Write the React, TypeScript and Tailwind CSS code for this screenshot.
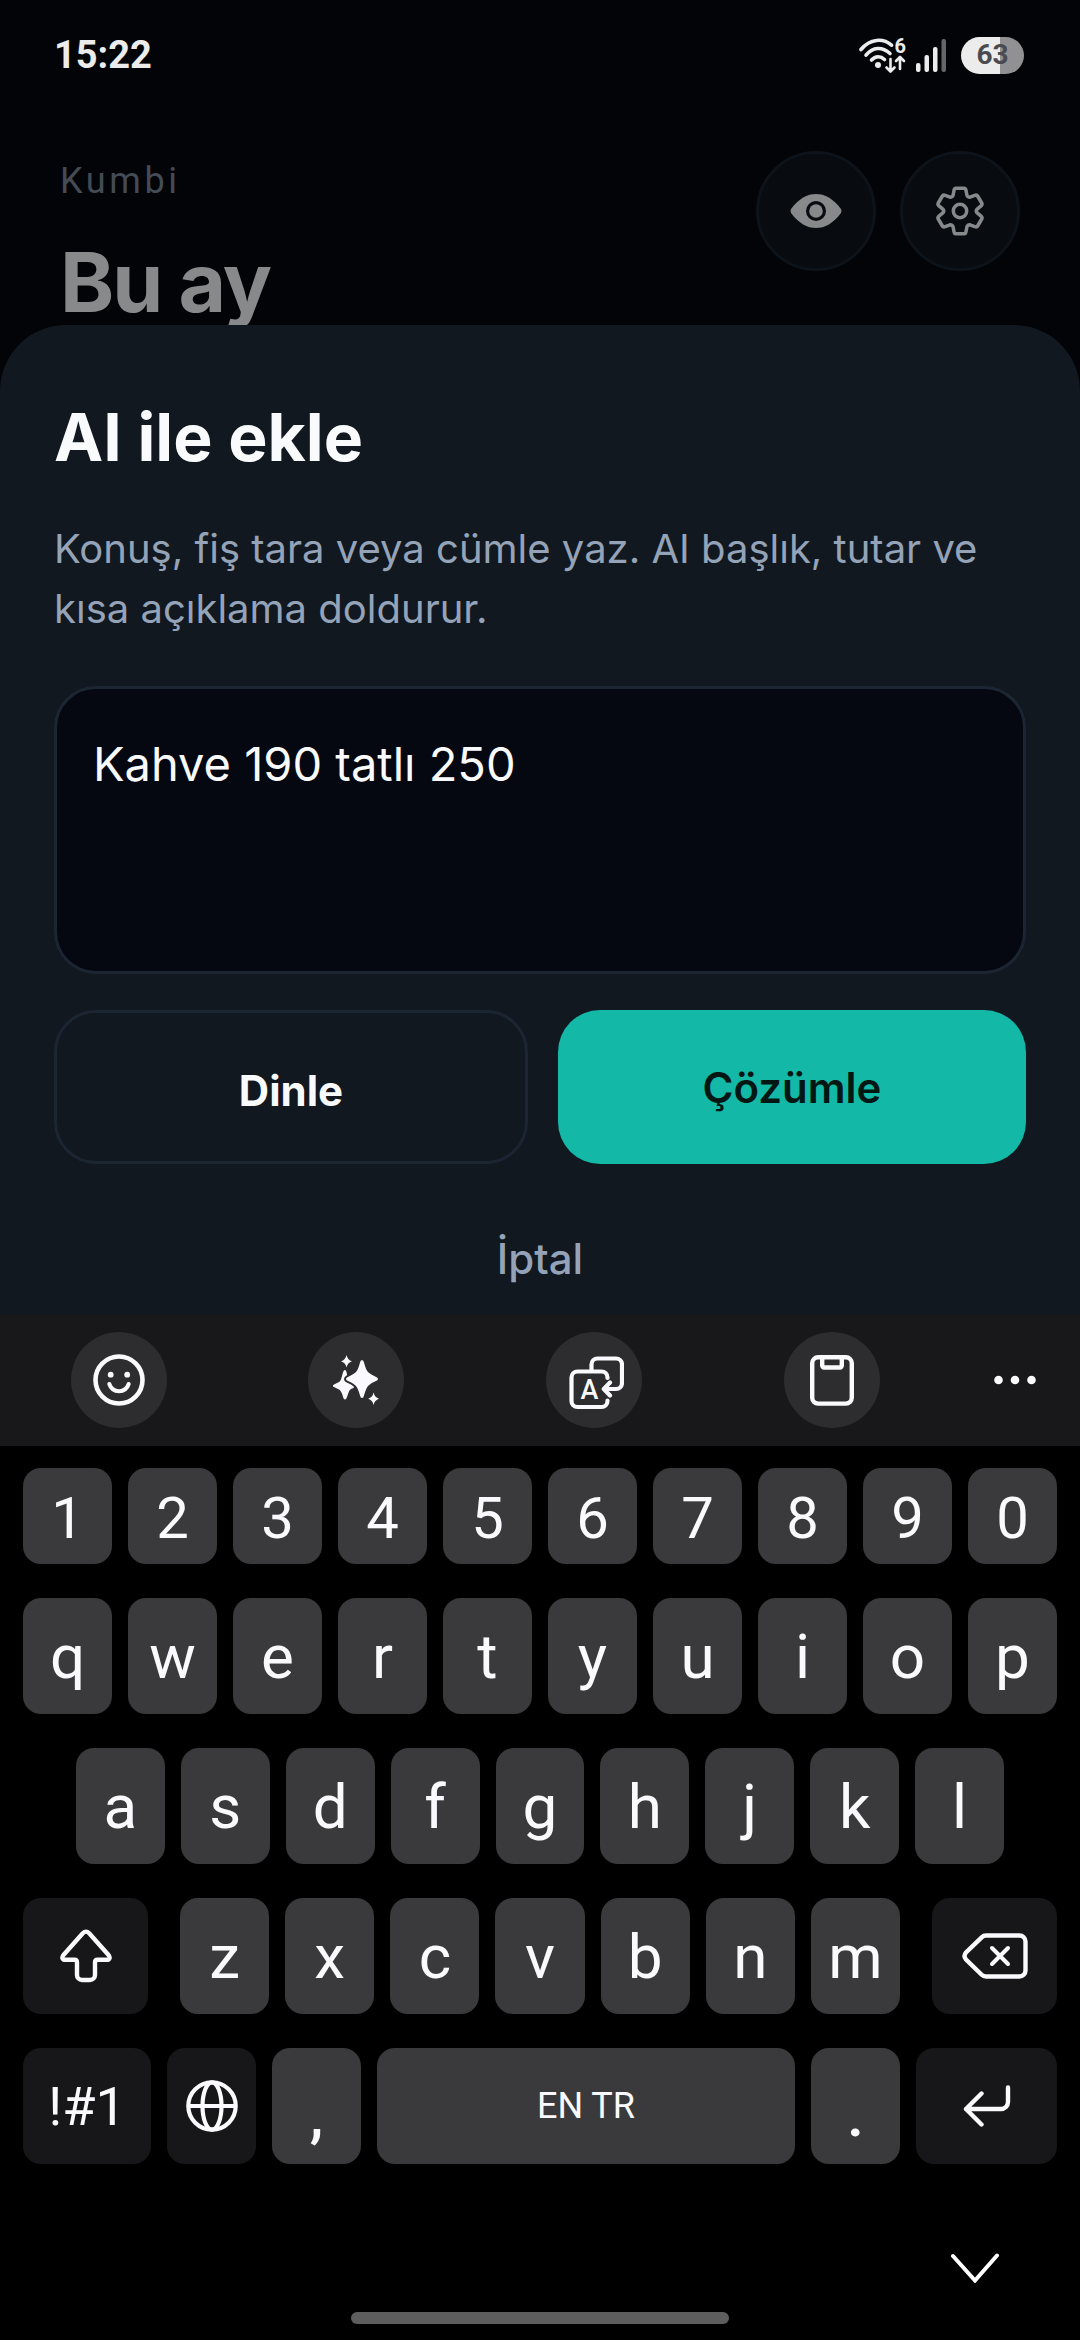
import React, { useState } from 'react';

const numberRow = ['1', '2', '3', '4', '5', '6', '7', '8', '9', '0'];
const topRow = ['q', 'w', 'e', 'r', 't', 'y', 'u', 'i', 'o', 'p'];
const homeRow = ['a', 's', 'd', 'f', 'g', 'h', 'j', 'k', 'l'];
const bottomRow = ['z', 'x', 'c', 'v', 'b', 'n', 'm'];

const keyBase =
  'flex min-w-0 items-center justify-center rounded-[18px] font-[Roboto,sans-serif] text-[#fafafe]';

type KeyProps = {
  label?: string;
  dark?: boolean;
  className?: string;
  children: React.ReactNode;
};

const Key = ({ label, dark, className = 'flex-1 text-[62px]', children }: KeyProps) => (
  <button
    type="button"
    aria-label={label}
    className={`${keyBase} ${dark ? 'bg-[#171719]' : 'bg-[#3a3a3c]'} ${className}`}
  >
    {children}
  </button>
);

const WifiIcon = () => (
  <svg width="50" height="52" viewBox="0 -8 50 52" fill="none" stroke="#ececec" strokeLinecap="round">
    <path d="M2 12.5C11 1.500 24 .8 32.500 8.200" strokeWidth="3.600" />
    <path d="M7 18.200C14 9.800 23 9.500 31 16.500" strokeWidth="3.600" />
    <path d="M12.500 23C16.500 18.800 21.500 18.800 25.500 22.500" strokeWidth="3.600" />
    <circle cx="19" cy="28" r="3" fill="#ececec" stroke="none" />
    <path d="M31.500 22v12M27.500 30.500l4 4 4-4" strokeWidth="2.600" strokeLinejoin="round" />
    <path d="M41 32V20.500M37 24l4-4 4 4" strokeWidth="2.600" strokeLinejoin="round" />
    <text x="35.500" y="16" fill="#ececec" stroke="none" fontSize="20" fontWeight="700" fontFamily="Roboto">
      6
    </text>
  </svg>
);

const SignalIcon = () => (
  <svg width="32" height="36" viewBox="0 0 32 36" fill="#ececec">
    <rect x="1" y="26" width="4.500" height="9" rx="2" />
    <rect x="9.500" y="18" width="4.500" height="17" rx="2" />
    <rect x="18" y="10" width="4.500" height="25" rx="2" />
    <rect x="26.500" y="2" width="4.500" height="33" rx="2" fill="#666" />
  </svg>
);

const EyeIcon = () => (
  <svg width="52" height="34" viewBox="0 0 52 34" fill="#88898b">
    <path d="M1 15C9 4.500 17 0 26 0s17 4.500 25 15q1 2 0 4C43 29.500 35 34 26 34S9 29.500 1 19q-1-2 0-4Z" />
    <circle cx="26" cy="17" r="10" fill="#080c11" />
    <circle cx="26" cy="17" r="6.800" />
  </svg>
);

const GearIcon = () => (
  <svg
    width="50"
    height="50"
    viewBox="-25 -25 50 50"
    fill="none"
    stroke="#88898b"
    strokeWidth="3.500"
    strokeLinejoin="round"
  >
    <path d="M-7-15.500L-5.800-21.500Q-5.500-22.700-4.300-22.700H4.300Q5.500-22.700 5.800-21.500L7-15.500Q8-13.300 9.900-13.800L15.500-15.800Q16.900-16.100 17.600-15L22-7.500Q22.400-6.600 21.600-5.700L16.900-1.700Q15.600 0 16.900 1.700L21.600 5.700Q22.400 6.600 22 7.500L17.600 15Q16.900 16.100 15.500 15.800L9.900 13.800Q8 13.300 7 15.500L5.800 21.500Q5.500 22.700 4.300 22.700H-4.300Q-5.500 22.700-5.800 21.500L-7 15.500Q-8 13.300-9.900 13.800L-15.500 15.800Q-16.900 16.100-17.600 15L-22 7.500Q-22.400 6.600-21.600 5.700L-16.900 1.700Q-15.600 0-16.900-1.700L-21.600-5.700Q-22.400-6.600-22-7.500L-17.600-15Q-16.900-16.100-15.500-15.800L-9.900-13.800Q-8-13.300-7-15.500Z" />
    <circle r="6.700" />
  </svg>
);

const SmileIcon = () => (
  <svg width="52" height="52" viewBox="0 0 52 52" fill="none" stroke="#fafafe" strokeWidth="4.600">
    <circle cx="26" cy="26" r="23.500" />
    <circle cx="17.700" cy="20.700" r="2.900" fill="#fafafe" stroke="none" />
    <circle cx="34.200" cy="20.700" r="2.900" fill="#fafafe" stroke="none" />
    <path d="M16.300 30C19.500 39.500 32.500 39.500 35.700 30" strokeWidth="4" strokeLinecap="round" />
  </svg>
);

const SparkleIcon = () => (
  <svg width="56" height="56" viewBox="0 0 56 56" fill="#fafafe">
    <path d="M17 18Q18 18 18.500 20Q20 29 22 31Q24 33 26.500 34.500Q26 36 23 37Q21 38 20 42Q18.500 47.500 17 47.500T14.500 43Q13 38.500 11 37.500L5 34.500Q4.500 33 6 32.500L11 30Q13 29 14.500 22Q15.500 18 17 18Z" />
    <path
      d="M34 8Q35.500 8 36 10.500Q38 18.500 40.500 20.500Q43 22.500 49 25.500Q51 27 49 28.500Q43 31 40.500 33.500Q38 36 36 43.500Q35.500 46 34 46T32 43.500Q30 36 27.500 33.500Q25 31 19 28.500Q17 27 19 25.500Q25 22.500 27.500 20.500Q30 18.500 32 10.500Q32.500 8 34 8Z"
      stroke="#2d2d2f"
      strokeWidth="4"
      paintOrder="stroke"
    />
    <path d="M18.500 3Q19.500 8 24 9.300Q19.500 10.600 18.500 15.500Q17.500 10.600 13 9.300Q17.500 8 18.500 3Z" />
    <path d="M45.600 40.500Q46.600 45.400 51 46.700Q46.600 48 45.600 53Q44.600 48 40.200 46.700Q44.600 45.400 45.600 40.500Z" />
  </svg>
);

const TranslateIcon = () => (
  <svg
    width="60"
    height="60"
    viewBox="0 0 60 60"
    fill="none"
    stroke="#fafafe"
    strokeWidth="4.200"
    strokeLinecap="round"
    strokeLinejoin="round"
  >
    <path d="M43.500 28v-.5a6 6 0 0 0-6-6h-24a6 6 0 0 0-6 6V51a6 6 0 0 0 6 6h24a6 6 0 0 0 6-6v-.5" />
    <path d="M27.500 20.500v-6a6 6 0 0 1 6-6H52a6 6 0 0 1 6 6V33a6 6 0 0 1-6 6H41M46 32.500L39.800 39l6.200 6.500" />
    <text
      x="25.500"
      y="49"
      textAnchor="middle"
      fill="#fafafe"
      stroke="none"
      fontSize="27"
      fontWeight="500"
      fontFamily="Roboto"
    >
      A
    </text>
  </svg>
);

const ClipboardIcon = () => (
  <svg width="52" height="52" viewBox="0 0 52 52" fill="none" stroke="#fafafe" strokeWidth="4.400">
    <rect x="6.200" y="3.200" width="39.600" height="46.400" rx="6" />
    <path d="M16.200 3.500v8a2 2 0 0 0 2 2h15.600a2 2 0 0 0 2-2v-8" />
  </svg>
);

const DotsIcon = () => (
  <svg width="44" height="10" viewBox="0 0 44 10" fill="#fafafe">
    <circle cx="5.500" cy="5" r="4.300" />
    <circle cx="22" cy="5" r="4.300" />
    <circle cx="38.500" cy="5" r="4.300" />
  </svg>
);

const ShiftIcon = () => (
  <svg width="52" height="54" viewBox="0 0 52 54" fill="none" stroke="#fafafe" strokeWidth="4.400">
    <path d="M22.800 4.300L3.700 25.700C1.200 28.500 2.500 30.800 5.500 30.800H14.500Q17 30.800 17 33.300V46a5 5 0 0 0 5 5h8a5 5 0 0 0 5-5V33.300Q35 30.800 37.500 30.800H46.500C49.500 30.800 50.800 28.500 48.300 25.700L29.200 4.300Q26 1 22.800 4.300Z" />
  </svg>
);

const BackspaceIcon = () => (
  <svg width="66" height="46" viewBox="0 0 66 46" fill="none" stroke="#fafafe" strokeWidth="4.400" strokeLinecap="round">
    <path d="M24 2.500h33.500a6 6 0 0 1 6 6v29a6 6 0 0 1-6 6H24q-2.500 0-4.300-1.800L4 26.500q-3-3.500 0-7L19.700 4.300Q21.500 2.500 24 2.500Z" />
    <path d="M30 15l16 16M46 15L30 31" strokeWidth="4" />
  </svg>
);

const GlobeIcon = () => (
  <svg width="52" height="52" viewBox="0 0 52 52" fill="none" stroke="#fafafe" strokeWidth="4.200">
    <circle cx="26" cy="26" r="23.700" />
    <ellipse cx="26" cy="26" rx="9.500" ry="23.700" />
    <path d="M3 26h46" />
  </svg>
);

const EnterIcon = () => (
  <svg
    width="48"
    height="42"
    viewBox="0 0 48 42"
    fill="none"
    stroke="#fafafe"
    strokeWidth="4.400"
    strokeLinecap="round"
    strokeLinejoin="round"
  >
    <path d="M45 2.500V17a7 7 0 0 1-7 7H3M18.500 8.500L3 24l15.500 15.500" />
  </svg>
);

const tools = [
  { label: 'Emoji', icon: <SmileIcon /> },
  { label: 'AI', icon: <SparkleIcon /> },
  { label: 'Translate', icon: <TranslateIcon /> },
  { label: 'Clipboard', icon: <ClipboardIcon /> },
];

const StatusBar = () => (
  <div className="flex h-[110px] items-center justify-between pr-14 pl-[54px] font-[Roboto,sans-serif] text-[#ececec]">
    <span className="text-[38px] font-bold">15:22</span>
    <div className="flex items-center">
      <WifiIcon />
      <span className="ml-1.5">
        <SignalIcon />
      </span>
      <span className="ml-3.5 flex h-[37px] w-[63px] items-center justify-center rounded-full bg-linear-to-r from-[#ececec] from-62% to-[#919194] to-62% text-[28px] font-bold text-[#4a4a4f]">
        63
      </span>
    </div>
  </div>
);

const Header = () => (
  <header className="flex items-start justify-between px-[60px] pt-[41px] pb-[26px]">
    <div className="pt-1.5">
      <p className="font-[Roboto,sans-serif] text-[36px] leading-[48px] tracking-widest text-[#444b55]">
        Kumbi
      </p>
      <h1 className="mt-[30px] text-[82px] leading-[96px] font-bold tracking-tight text-[#88898b]">
        Bu ay
      </h1>
    </div>
    <div className="flex gap-6">
      <button
        type="button"
        aria-label="Tutarları gizle"
        className="flex size-[120px] items-center justify-center rounded-full border-3 border-[#0d131a] bg-[#080c11]"
      >
        <EyeIcon />
      </button>
      <button
        type="button"
        aria-label="Ayarlar"
        className="flex size-[120px] items-center justify-center rounded-full border-3 border-[#0d131a] bg-[#080c11]"
      >
        <GearIcon />
      </button>
    </div>
  </header>
);

const AddSheet = () => {
  const [text, setText] = useState('Kahve 190 tatlı 250');

  return (
    <section className="relative -mt-8 flex flex-col rounded-t-[66px] bg-[#111820] px-[54px] pt-[72px]">
      <h2 className="text-[66px] leading-[80px] font-bold text-[#f8fafc]">AI ile ekle</h2>
      <label htmlFor="entry" className="mt-[42px] text-[40px] leading-[60px] text-[#94a3b8]">
        Konuş, fiş tara veya cümle yaz. AI başlık, tutar ve kısa açıklama doldurur.
      </label>
      <textarea
        id="entry"
        value={text}
        onChange={(e) => setText(e.target.value)}
        className="mt-[47px] h-72 resize-none rounded-[42px] border-3 border-[#1c2532] bg-[#050811] px-9 pt-[45px] text-[47px] leading-[60px] text-[#f8fafc] outline-none"
      />
      <div className="mt-9 flex gap-[30px] text-[42px] leading-[60px]">
        <button
          type="button"
          className="flex flex-1 justify-center rounded-[42px] border-3 border-[#1c2532] pt-12 pb-10 font-bold text-[#f8fafc]"
        >
          Dinle
        </button>
        <button
          type="button"
          className="flex flex-1 justify-center rounded-[42px] bg-[#14b8a6] pt-12 pb-10 font-semibold text-[#021713]"
        >
          Çözümle
        </button>
      </div>
      <button
        type="button"
        className="mt-10 py-[25px] text-[42px] leading-[60px] font-medium text-[#94a3b8]"
      >
        İptal
      </button>
    </section>
  );
};

const Keyboard = () => (
  <section className="bg-black">
    <div className="flex h-[132px] items-center bg-[#18181a]">
      {tools.map((tool) => (
        <div key={tool.label} className="flex w-[22%] justify-center">
          <button
            type="button"
            aria-label={tool.label}
            className="flex size-24 items-center justify-center rounded-full bg-[#2d2d2f]"
          >
            {tool.icon}
          </button>
        </div>
      ))}
      <button type="button" aria-label="More" className="flex h-24 flex-1 items-center justify-center">
        <DotsIcon />
      </button>
    </div>

    <div className="flex flex-col gap-[34px] px-[23px] pt-[22px]">
      <div className="flex h-24 gap-4">
        {numberRow.map((k) => (
          <Key key={k} className="flex-1 pt-1 text-[58px]">
            {k}
          </Key>
        ))}
      </div>
      <div className="flex h-[116px] gap-4">
        {topRow.map((k) => (
          <Key key={k}>{k}</Key>
        ))}
      </div>
      <div className="flex h-[116px] gap-4 px-[53px]">
        {homeRow.map((k) => (
          <Key key={k}>{k}</Key>
        ))}
      </div>
      <div className="flex h-[116px] gap-8">
        <Key label="Shift" dark className="w-[125px]">
          <ShiftIcon />
        </Key>
        <div className="flex flex-1 gap-4">
          {bottomRow.map((k) => (
            <Key key={k}>{k}</Key>
          ))}
        </div>
        <Key label="Backspace" dark className="w-[125px]">
          <BackspaceIcon />
        </Key>
      </div>
      <div className="flex h-[116px] gap-4">
        <Key dark className="w-32 text-[54px]">
          !#1
        </Key>
        <Key label="Language" dark className="w-[89px]">
          <GlobeIcon />
        </Key>
        <Key className="w-[89px] pt-5 text-[58px] font-semibold">,</Key>
        <Key label="Space" className="flex-1 text-[36px]">
          EN TR
        </Key>
        <Key className="w-[89px] pt-5 text-[58px] font-semibold">.</Key>
        <Key label="Enter" dark className="w-[141px]">
          <EnterIcon />
        </Key>
      </div>
    </div>

    <div className="flex justify-end pt-[89px] pr-20">
      <button type="button" aria-label="Hide keyboard">
        <svg
          width="50"
          height="30"
          viewBox="0 0 50 30"
          fill="none"
          stroke="#fff"
          strokeWidth="4"
          strokeLinecap="round"
          className="block"
        >
          <path d="M3 3l22 24.500L47 2.500" />
        </svg>
      </button>
    </div>
    <div className="mx-auto mt-[29px] h-3 w-[35%] rounded-full bg-[#5d5d5d]" />
    <div className="h-4" />
  </section>
);

const App = () => (
  <main className="min-h-screen bg-black font-[Inter,sans-serif]">
    <div className="bg-[#020408]">
      <StatusBar />
      <Header />
      <AddSheet />
    </div>
    <Keyboard />
  </main>
);

export default App;
